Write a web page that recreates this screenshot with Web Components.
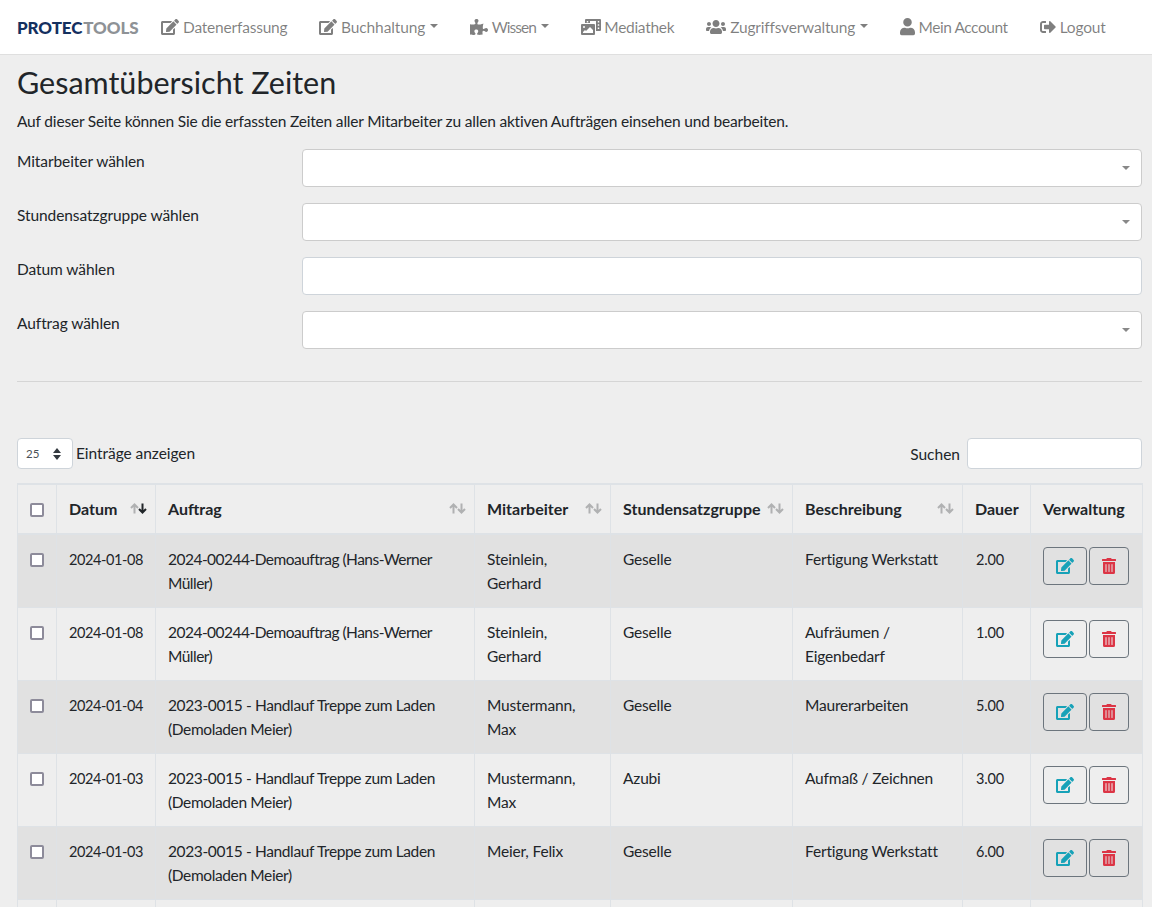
<!doctype html>
<html lang="de"><head><meta charset="utf-8"><title>Gesamtübersicht Zeiten</title>
<style>
html,body{margin:0;height:907px;overflow:hidden;background:#eee}
body{font-family:Lato,"Noto Sans",sans-serif;font-size:15.5px;line-height:24px;color:#212529;letter-spacing:-.18px}
</style></head><body>
<app-navbar>
  <nav-link icon="edit" w="18" ls="-.2">Datenerfassung</nav-link>
  <nav-link icon="edit" w="18" caret ls="-.1" gap="3.5">Buchhaltung</nav-link>
  <nav-link icon="puzzle" w="18" caret ls="-1" gap="3.5">Wissen</nav-link>
  <nav-link icon="media" w="20" ls="-.3" gap="3.5">Mediathek</nav-link>
  <nav-link icon="users" w="20" caret ls="-.2" gap="4">Zugriffsverwaltung</nav-link>
  <nav-link icon="user" w="15" ls="-.45" gap="3.5">Mein Account</nav-link>
  <nav-link icon="logout" w="16" ls="-.2" gap="4">Logout</nav-link>
</app-navbar>
<page-main>
  <page-head title="Gesamtübersicht Zeiten">Auf dieser Seite können Sie die erfassten Zeiten aller Mitarbeiter zu allen aktiven Aufträgen einsehen und bearbeiten.</page-head>
  <form-row label="Mitarbeiter wählen" kind="select"></form-row>
  <form-row label="Stundensatzgruppe wählen" kind="select"></form-row>
  <form-row label="Datum wählen" kind="input"></form-row>
  <form-row label="Auftrag wählen" kind="select"></form-row>
  <page-rule></page-rule>
  <table-tools></table-tools>
  <time-table></time-table>
</page-main>
<script>
const ICONS={
edit:['0 0 576 512','M402.6 83.2l90.2 90.2c3.8 3.8 3.8 10 0 13.8L274.4 405.6l-92.8 10.3c-12.4 1.4-22.9-9.1-21.5-21.5l10.3-92.8L388.8 83.2c3.8-3.8 10-3.8 13.8 0zm162-22.9l-48.8-48.8c-15.2-15.2-39.9-15.2-55.2 0l-35.4 35.4c-3.8 3.8-3.8 10 0 13.8l90.2 90.2c3.8 3.8 10 3.8 13.8 0l35.4-35.4c15.2-15.3 15.2-40 0-55.2zM384 346.2V448H64V128h229.8c3.2 0 6.2-1.3 8.5-3.5l40-40c7.6-7.6 2.2-20.5-8.5-20.5H48C21.5 64 0 85.5 0 112v352c0 26.5 21.5 48 48 48h352c26.5 0 48-21.5 48-48V306.2c0-10.7-12.9-16-20.5-8.5l-40 40c-2.2 2.3-3.5 5.3-3.5 8.5z'],
trash:['0 0 448 512','M32 464a48 48 0 0 0 48 48h288a48 48 0 0 0 48-48V128H32zm272-256a16 16 0 0 1 32 0v224a16 16 0 0 1-32 0zm-96 0a16 16 0 0 1 32 0v224a16 16 0 0 1-32 0zm-96 0a16 16 0 0 1 32 0v224a16 16 0 0 1-32 0zM432 32H312l-9.4-18.7A24 24 0 0 0 281.1 0H166.8a23.72 23.72 0 0 0-21.4 13.3L136 32H16A16 16 0 0 0 0 48v32a16 16 0 0 0 16 16h416a16 16 0 0 0 16-16V48a16 16 0 0 0-16-16z'],
user:['0 0 448 512','M224 256c70.7 0 128-57.3 128-128S294.7 0 224 0 96 57.3 96 128s57.3 128 128 128zm89.6 32h-16.7c-22.2 10.2-46.9 16-72.9 16s-50.6-5.8-72.9-16h-16.7C60.2 288 0 348.2 0 422.4V464c0 26.5 21.5 48 48 48h352c26.5 0 48-21.5 48-48v-41.6c0-74.2-60.2-134.4-134.4-134.4z'],
users:['0 0 640 512','M96 224c35.3 0 64-28.7 64-64s-28.7-64-64-64-64 28.7-64 64 28.7 64 64 64zm448 0c35.3 0 64-28.7 64-64s-28.7-64-64-64-64 28.7-64 64 28.7 64 64 64zm32 32h-64c-17.6 0-33.5 7.1-45.1 18.6 40.3 22.1 68.9 62 75.1 109.4h66c17.7 0 32-14.3 32-32v-32c0-35.3-28.7-64-64-64zm-256 0c61.9 0 112-50.1 112-112S381.9 32 320 32 208 82.1 208 144s50.1 112 112 112zm76.8 32h-8.3c-20.8 10-43.9 16-68.5 16s-47.6-6-68.5-16h-8.3C179.6 288 128 339.6 128 403.2V432c0 26.5 21.5 48 48 48h288c26.5 0 48-21.5 48-48v-28.8c0-63.6-51.6-115.2-115.2-115.2zm-223.7-13.4C161.5 263.1 145.6 256 128 256H64c-35.3 0-64 28.7-64 64v32c0 17.7 14.3 32 32 32h65.9c6.3-47.4 34.9-87.3 75.2-109.4z'],
puzzle:['0 0 576 512','M519.442 288.651c-41.519 0-59.5 31.593-82.058 31.593C377.409 320.244 432 144 432 144s-196.288 80-196.288-3.297c0-35.827 36.288-46.25 36.288-85.985C272 19.216 243.885 0 210.539 0c-34.654 0-66.366 18.891-66.366 56.346 0 41.364 31.711 59.277 31.711 81.75C175.885 207.719 0 166.758 0 166.758v333.237s178.635 41.047 178.635-28.662c0-22.473-40-40.107-40-81.471 0-37.456 29.25-56.346 63.577-56.346 33.673 0 61.788 19.216 61.788 54.717 0 39.735-36.288 50.158-36.288 85.985 0 60.803 129.675 25.73 181.23 25.73 0 0-34.725-120.101 25.827-120.101 35.962 0 46.423 36.152 86.308 36.152C556.712 416 576 387.99 576 354.443c0-34.199-18.962-65.792-56.558-65.792z'],
logout:['0 0 512 512','M497 273L329 441c-15 15-41 4.5-41-17v-96H152c-13.3 0-24-10.7-24-24v-96c0-13.3 10.7-24 24-24h136V88c0-21.4 25.9-32 41-17l168 168c9.3 9.4 9.3 24.6 0 34zM192 436v-40c0-6.6-5.4-12-12-12H96c-17.7 0-32-14.3-32-32V160c0-17.7 14.3-32 32-32h84c6.6 0 12-5.4 12-12V76c0-6.6-5.4-12-12-12H96c-53 0-96 43-96 96v192c0 53 43 96 96 96h84c6.6 0 12-5.4 12-12z'],
media:['0 0 640 512','M608 0H160a32 32 0 0 0-32 32v96h160V64h192v320h128a32 32 0 0 0 32-32V32a32 32 0 0 0-32-32zM232 103a9 9 0 0 1-9 9h-30a9 9 0 0 1-9-9V73a9 9 0 0 1 9-9h30a9 9 0 0 1 9 9zm352 208a9 9 0 0 1-9 9h-30a9 9 0 0 1-9-9v-30a9 9 0 0 1 9-9h30a9 9 0 0 1 9 9zm0-104a9 9 0 0 1-9 9h-30a9 9 0 0 1-9-9v-30a9 9 0 0 1 9-9h30a9 9 0 0 1 9 9zm0-104a9 9 0 0 1-9 9h-30a9 9 0 0 1-9-9V73a9 9 0 0 1 9-9h30a9 9 0 0 1 9 9zm-168 57H32a32 32 0 0 0-32 32v288a32 32 0 0 0 32 32h384a32 32 0 0 0 32-32V192a32 32 0 0 0-32-32zM96 224a32 32 0 1 1-32 32 32 32 0 0 1 32-32zm288 224H64v-32l64-64 32 32 128-128 96 96z']
};
const svg=(n,w,color='currentColor')=>`<svg width="${w}" viewBox="${ICONS[n][0]}" fill="${color}" style="display:block;flex:none" aria-hidden="true"><path d="${ICONS[n][1]}"/></svg>`;
function def(name,html,setup){
  customElements.define(name,class extends HTMLElement{
    connectedCallback(){
      if(this.shadowRoot)return;
      const r=this.attachShadow({mode:'open'});
      r.innerHTML=typeof html==='function'?html(this):html;
      if(setup)setup(this,r);
    }
  });
}
def('app-navbar',`<style>
:host{display:flex;align-items:center;height:54px;background:#fff;border-bottom:1px solid #dfdfdf;padding-left:17px}
.brand{font:900 17px/24px Lato,sans-serif;letter-spacing:-.1px;width:121px;margin-right:7px;white-space:nowrap;flex:none;color:#8e9296;padding-top:2px}
.brand b{color:#14305f;font-weight:900;margin-right:1px}
</style><span class="brand"><b>PROTEC</b>TOOLS</span><slot></slot>`);
def('nav-link',h=>`<style>
:host{display:flex;align-items:center;padding:0 16px;color:rgba(0,0,0,.5);white-space:nowrap;flex:none}
.t{margin-left:${h.getAttribute('gap')||4}px;padding-bottom:1px;letter-spacing:${h.getAttribute('ls')}px}
.c{margin-left:5px;border-top:4.8px solid currentColor;border-left:4.8px solid transparent;border-right:4.8px solid transparent;transform:translateY(-1px)}
</style>${svg(h.getAttribute('icon'),h.getAttribute('w'))}<span class="t"><slot></slot></span>${h.hasAttribute('caret')?'<span class="c"></span>':''}`);
def('page-main',`<style>:host{display:block;padding:8px 10px 0 17px}</style><slot></slot>`);
def('page-head',h=>`<style>
:host{display:block}
h1{margin:0 0 8px;font:400 30.5px/38px Lato,"Noto Sans",sans-serif;color:#212529;letter-spacing:0}
p{margin:0 0 16px}
</style><h1>${h.getAttribute('title')}</h1><p><slot></slot></p>`);
def('form-row',h=>`<style>
:host{display:grid;grid-template-columns:285px 840px;margin-bottom:16px}
label{letter-spacing:-.08px}
.c{height:38px;box-sizing:border-box;background:#fff;border:1px solid ${h.getAttribute('kind')==='select'?'#ccc':'#ced4da'};border-radius:4px;display:flex;align-items:center;justify-content:flex-end;padding-right:11px}
.a{border-top:4px solid #888;border-left:4px solid transparent;border-right:4px solid transparent}
</style><label>${h.getAttribute('label')}</label><div class="c">${h.getAttribute('kind')==='select'?'<span class="a"></span>':''}</div>`);
def('page-rule',`<style>:host{display:block;height:1px;margin:32px 0 56px;background:rgba(0,0,0,.1)}</style>`);
def('table-tools',`<style>
:host{display:flex;justify-content:space-between;align-items:center;height:31px;margin-bottom:14px;letter-spacing:0}
.l,.r{display:flex;align-items:center}
.l>span:last-child{padding-bottom:2px;letter-spacing:-.05px}
.s{box-sizing:border-box;width:56px;height:31px;background:#fff;border:1px solid #ced4da;border-radius:4px;font-size:11.5px;color:#495057;display:flex;align-items:center;justify-content:space-between;padding:0 11px 0 8px;margin-right:3px}
.i{box-sizing:border-box;width:175px;height:31px;background:#fff;border:1px solid #ced4da;border-radius:4px;margin-left:7px}
svg{display:block}
</style><div class="l"><span class="s">25<svg width="8" height="12" viewBox="0 0 8 12" fill="#343a40"><path d="M4 0l4 5H0zM4 12L0 7h8z"/></svg></span><span>Einträge anzeigen</span></div><div class="r"><span>Suchen</span><span class="i"></span></div>`);
def('check-box',`<style>:host{display:block;box-sizing:border-box;width:14px;height:14px;background:#fff;border:2px solid #8d8b9a;border-radius:2px;margin:5px 0 0 0}</style>`);
const sortIcon=a=>`<svg class="so" width="17" height="11" viewBox="0 0 17 11" style="flex:none"><g fill="none" stroke-width="2"><path d="M4.5 10.5V2M1 5l3.5-3.5L8 5" stroke="#212529" opacity=".3"/><path d="M12.5.5V9M9 6l3.5 3.5L16 6" stroke="#212529" opacity="${a?1:.3}"/></g></svg>`;
const HEAD=[['Datum',1,1],['Auftrag',1],['Mitarbeiter',1],['Stundensatzgruppe',1],['Beschreibung',1],['Dauer'],['Verwaltung']];
const ROWS=[
['2024-01-08','2024-00244-Demoauftrag (Hans-Werner Müller)','Steinlein, Gerhard','Geselle','Fertigung Werkstatt','2.00'],
['2024-01-08','2024-00244-Demoauftrag (Hans-Werner Müller)','Steinlein, Gerhard','Geselle','Aufräumen / Eigenbedarf','1.00'],
['2024-01-04','2023-0015 - Handlauf Treppe zum Laden (Demoladen Meier)','Mustermann, Max','Geselle','Maurerarbeiten','5.00'],
['2024-01-03','2023-0015 - Handlauf Treppe zum Laden (Demoladen Meier)','Mustermann, Max','Azubi','Aufmaß / Zeichnen','3.00'],
['2024-01-03','2023-0015 - Handlauf Treppe zum Laden (Demoladen Meier)','Meier, Felix','Geselle','Fertigung Werkstatt','6.00']];
const cls=(c,i)=>i==0?'n d':i==5?'n u':i==1?(c.startsWith('2024')?'q':'o'):'';
def('row-actions',`<style>
:host{display:flex;gap:2px}
span{box-sizing:border-box;height:38px;border:1px solid #6c757d;border-radius:4px;display:flex;align-items:center;justify-content:center}
.e{width:44px}.d{width:40px}
</style><span class="e">${svg('edit',18,'#17a2b8')}</span><span class="d">${svg('trash',14,'#dc3545')}</span>`);
def('time-table',`<style>
:host{display:block}
table{border-collapse:collapse;table-layout:fixed;width:1125px;border-top:2px solid #dee2e6}
th,td{border:1px solid #dee2e6;padding:12px;text-align:left;vertical-align:top;box-sizing:border-box}
th{font-weight:700;padding:12px 8px 12px 12px;border-bottom:2px solid #dee2e6;font-size:16px;letter-spacing:0}
th>div{display:flex;justify-content:space-between;align-items:center;gap:3px;white-space:nowrap}
tbody tr:nth-child(odd){background:rgba(0,0,0,.05)}
td{height:73px}
.n{font-size:14.5px;white-space:nowrap;padding-top:13px}
.d{letter-spacing:-.4px}
.u{padding-left:13px}
.o{letter-spacing:-.37px}
.q{letter-spacing:-.52px}
.k{padding:13px 12px}
.so{margin-top:-2px}
</style><table><colgroup><col style="width:39px"><col style="width:99px"><col style="width:319px"><col style="width:136px"><col style="width:182px"><col style="width:170px"><col style="width:68px"><col style="width:112px"></colgroup>
<thead><tr><th class="k"><check-box></check-box></th>${HEAD.map(c=>`<th><div><span>${c[0]}</span>${c[1]?sortIcon(c[2]):''}</div></th>`).join('')}</tr></thead>
<tbody>${ROWS.map(r=>`<tr><td class="k"><check-box></check-box></td>${r.map((c,i)=>`<td class="${cls(c,i)}">${c}</td>`).join('')}<td><row-actions></row-actions></td></tr>`).join('')}<tr>${'<td></td>'.repeat(8)}</tr></tbody></table>`);
</script>
</body></html>
